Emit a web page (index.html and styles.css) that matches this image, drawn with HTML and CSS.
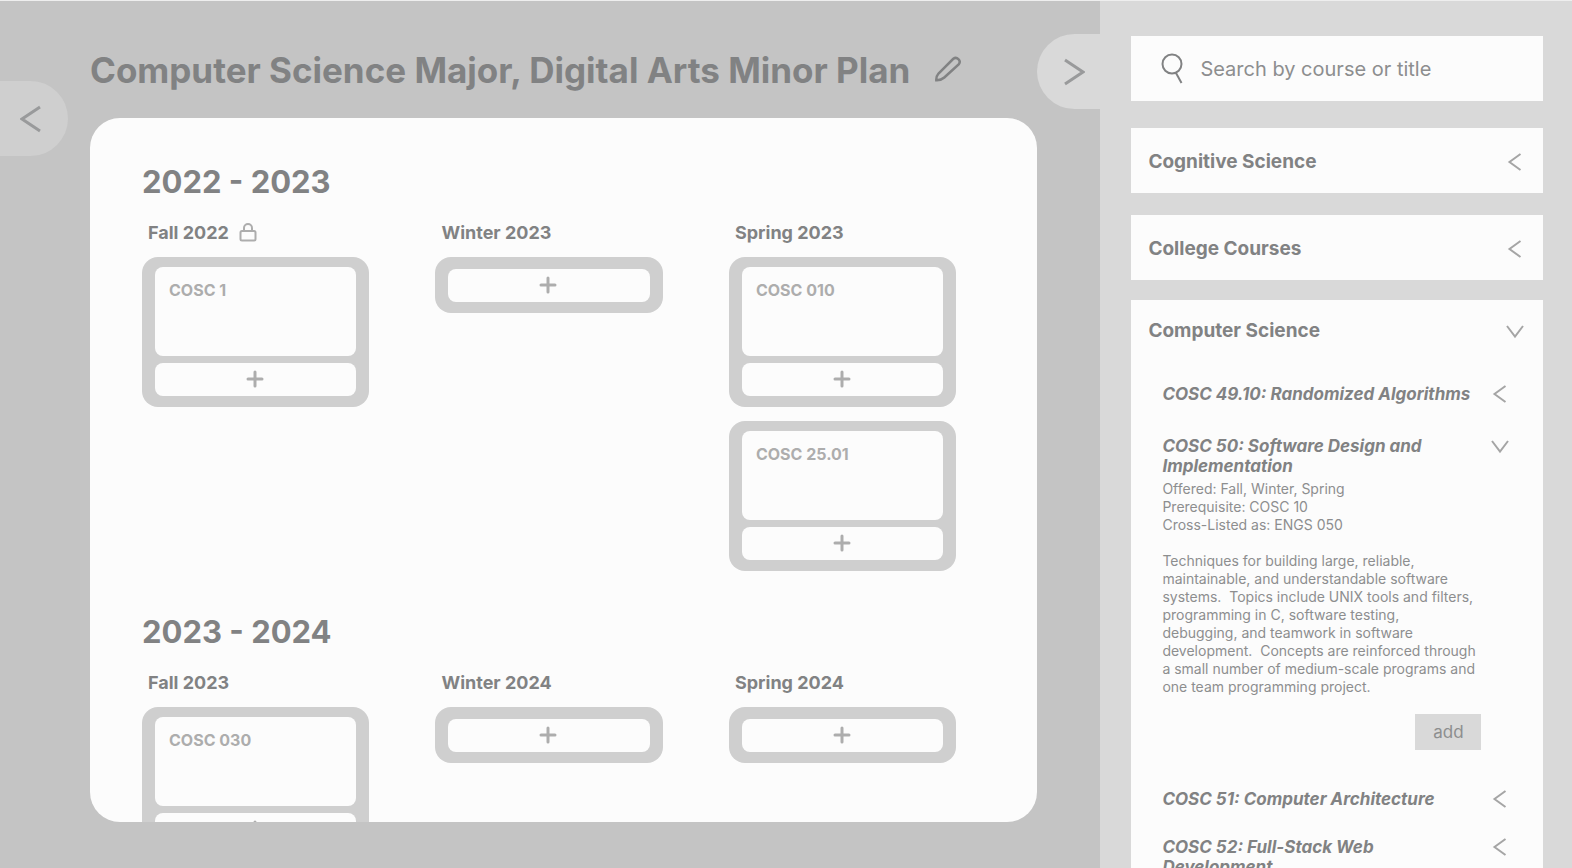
FILE: index.html
```html
<!DOCTYPE html>
<html lang="en">
<head>
<meta charset="utf-8">
<meta name="viewport" content="width=device-width, initial-scale=1">
<title>Course Plan</title>
<link rel="stylesheet" href="styles.css">
</head>
<body>
<svg class="sprite" aria-hidden="true">
  <symbol id="i-left" viewBox="0 0 18 18"><path d="M14.500 1 3.500 9l11 8"/></symbol>
  <symbol id="i-down" viewBox="0 0 18 18"><path d="M1 4l8 10.500L17 4"/></symbol>
  <symbol id="i-plus" viewBox="0 0 18 18"><path d="M9 2v14M2 9h14"/></symbol>
</svg>
<div class="app">
  <main class="planner">
    <button class="tab tab-prev" type="button" aria-label="Previous"><svg class="tab-icon" viewBox="0 0 22 28"><path d="M20 2 2 14l18 12"/></svg></button>
    <button class="tab tab-next" type="button" aria-label="Collapse course list"><svg class="tab-icon" viewBox="0 0 22 28"><path d="M2 2l18 12L2 26"/></svg></button>
    <header class="plan-header">
      <h1 class="plan-title">Computer Science Major, Digital Arts Minor Plan</h1>
      <button class="edit" type="button" aria-label="Edit plan name"><svg class="edit-icon" viewBox="0 0 28 28"><path d="M2.300 25.200q-.2-4 2.200-6.700L19.300 3.800a3.900 3.900 0 0 1 5.600 5.300L10.300 22.500q-3.300 2.900-8 2.700z"/></svg></button>
    </header>
    <div class="plan">
      <section class="year">
        <h2 class="year-title">2022 - 2023</h2>
        <div class="terms">
          <section class="term">
            <h3 class="term-title">Fall 2022 <svg class="lock" viewBox="0 0 18 20" role="img" aria-label="Locked"><rect x="1.500" y="8" width="15" height="9.500" rx="1.500"/><path d="M5 8V5a4 4 0 0 1 8 0v3"/></svg></h3>
            <div class="slot"><article class="course">COSC 1</article><button class="add-slot" type="button" aria-label="Add to Fall 2022"><svg class="plus"><use href="#i-plus"/></svg></button></div>
          </section>
          <section class="term">
            <h3 class="term-title">Winter 2023</h3>
            <div class="slot slot-empty"><button class="add-slot" type="button" aria-label="Add to Winter 2023"><svg class="plus"><use href="#i-plus"/></svg></button></div>
          </section>
          <section class="term">
            <h3 class="term-title">Spring 2023</h3>
            <div class="slot"><article class="course">COSC 010</article><button class="add-slot" type="button" aria-label="Add to Spring 2023"><svg class="plus"><use href="#i-plus"/></svg></button></div>
            <div class="slot"><article class="course">COSC 25.01</article><button class="add-slot" type="button" aria-label="Add to Spring 2023"><svg class="plus"><use href="#i-plus"/></svg></button></div>
          </section>
        </div>
      </section>
      <section class="year">
        <h2 class="year-title">2023 - 2024</h2>
        <div class="terms">
          <section class="term">
            <h3 class="term-title">Fall 2023</h3>
            <div class="slot"><article class="course">COSC 030</article><button class="add-slot" type="button" aria-label="Add to Fall 2023"><svg class="plus"><use href="#i-plus"/></svg></button></div>
          </section>
          <section class="term">
            <h3 class="term-title">Winter 2024</h3>
            <div class="slot slot-empty"><button class="add-slot" type="button" aria-label="Add to Winter 2024"><svg class="plus"><use href="#i-plus"/></svg></button></div>
          </section>
          <section class="term">
            <h3 class="term-title">Spring 2024</h3>
            <div class="slot slot-empty"><button class="add-slot" type="button" aria-label="Add to Spring 2024"><svg class="plus"><use href="#i-plus"/></svg></button></div>
          </section>
        </div>
      </section>
    </div>
  </main>
  <aside class="catalog">
    <label class="search">
      <svg class="search-icon" viewBox="0 0 24 32" aria-hidden="true"><circle cx="11" cy="11" r="9.500"/><path d="M15 20l5.500 10"/></svg>
      <input class="search-input" type="text" placeholder="Search by course or title" aria-label="Search by course or title">
    </label>
    <div class="subjects">
      <button class="subject subject-head" type="button">Cognitive Science<svg class="chev"><use href="#i-left"/></svg></button>
      <button class="subject subject-head" type="button">College Courses<svg class="chev"><use href="#i-left"/></svg></button>
    </div>
    <section class="subject">
      <button class="subject-head subject-head-open" type="button" aria-expanded="true">Computer Science<svg class="chev"><use href="#i-down"/></svg></button>
      <div class="offerings">
        <button class="offering" type="button"><span class="offering-name">COSC 49.10: Randomized Algorithms</span><svg class="chev"><use href="#i-left"/></svg></button>
        <button class="offering offering-open" type="button" aria-expanded="true"><span class="offering-name">COSC 50: Software Design and Implementation</span><svg class="chev"><use href="#i-down"/></svg></button>
        <div class="details">
          <p class="facts">Offered: Fall, Winter, Spring<br>Prerequisite: COSC 10<br>Cross-Listed as: ENGS 050</p>
          <p class="facts">Techniques for building large, reliable, maintainable, and understandable software systems.&nbsp; Topics include UNIX tools and filters, programming in C, software testing, debugging, and teamwork in software development.&nbsp; Concepts are reinforced through a small number of medium-scale programs and one team programming project.</p>
          <button class="add-course" type="button">add</button>
        </div>
        <button class="offering" type="button"><span class="offering-name">COSC 51: Computer Architecture</span><svg class="chev"><use href="#i-left"/></svg></button>
        <button class="offering" type="button"><span class="offering-name">COSC 52: Full-Stack Web Development</span><svg class="chev"><use href="#i-left"/></svg></button>
      </div>
    </section>
  </aside>
</div>
</body>
</html>
```
FILE: styles.css
```css
:root {
  --text: #818283;
  --muted: #adadad;
  --page: #c4c4c4;
  --tile: #cfcfcf;
  --side: #d9d9d9;
  --paper: #fcfcfc;
}

* { box-sizing: border-box; }

body {
  margin: 0;
  color: var(--text);
  font-family: Inter, "Liberation Sans", sans-serif;
}

h1, h2, h3, p { margin: 0; }

button {
  margin: 0;
  padding: 0;
  border: 0;
  background: none;
  color: inherit;
  font: inherit;
  text-align: left;
  cursor: pointer;
}

svg {
  display: block;
  flex: none;
  fill: none;
  stroke: currentColor;
}

.sprite { position: absolute; width: 0; height: 0; }

.app {
  display: flex;
  height: 100vh;
  overflow: hidden;
  border-top: 1px solid #eeeeee;
  background: var(--page);
}

/* Plan area */

.planner {
  position: relative;
  flex: 1;
  min-width: 0;
  display: flex;
  flex-direction: column;
  gap: 26px;
  padding: 47px 63px 46px 90px;
}

.plan-header { display: flex; align-items: center; gap: 24px; }

.plan-title { font-size: 35px; line-height: 44px; font-weight: 700; white-space: nowrap; }

.edit { padding-bottom: 2px; }

.edit-icon { width: 28px; height: 28px; stroke-width: 2.5; }

.tab {
  position: absolute;
  display: flex;
  align-items: center;
  height: 75px;
}

.tab-prev {
  top: 80px;
  left: 0;
  width: 68px;
  padding-left: 20px;
  border-radius: 0 38px 38px 0;
  background: var(--tile);
}

.tab-next {
  top: 33px;
  right: 0;
  width: 63px;
  padding-left: 26px;
  border-radius: 38px 0 0 38px;
  background: var(--side);
}

.tab-icon { width: 22px; height: 28px; stroke: #999a9b; stroke-width: 3; }

.plan {
  flex: 1;
  min-height: 0;
  overflow: hidden;
  display: flex;
  flex-direction: column;
  gap: 41px;
  padding: 44px 81px 0 52px;
  border-radius: 30px;
  background: var(--paper);
}

.year { display: flex; flex-direction: column; gap: 21px; }

.year-title { font-size: 31px; line-height: 40px; font-weight: 700; }

.terms {
  display: grid;
  grid-template-columns: repeat(3, minmax(0, 1fr));
  align-items: start;
  gap: 66px;
}

.term { display: flex; flex-direction: column; gap: 14px; }

.term-title {
  display: flex;
  align-items: center;
  gap: 10px;
  padding-left: 6px;
  font-size: 18px;
  line-height: 20px;
  font-weight: 700;
}

.lock { width: 18px; height: 20px; color: var(--muted); stroke-width: 2; }

.slot {
  display: flex;
  flex-direction: column;
  gap: 7px;
  padding: 10px 13px 11px;
  border-radius: 16px;
  background: var(--tile);
}

.slot-empty { padding-top: 12px; }

.course {
  min-height: 89px;
  padding: 13px 14px;
  border-radius: 8px;
  background: var(--paper);
  color: var(--muted);
  font-size: 16px;
  line-height: 20px;
  font-weight: 700;
}

.add-slot {
  display: flex;
  align-items: center;
  justify-content: center;
  height: 33px;
  padding: 0 2px 2px 0;
  border-radius: 8px;
  background: var(--paper);
  color: var(--muted);
}

.plus { width: 18px; height: 18px; stroke-width: 3; stroke-linecap: round; }

/* Course catalog */

.catalog {
  flex: none;
  width: 30%;
  min-width: 440px;
  overflow: hidden;
  padding: 35px 29px 0 31px;
  background: var(--side);
}

.search {
  display: flex;
  align-items: center;
  gap: 15px;
  height: 65px;
  padding: 1px 24px 0 30px;
  background: var(--paper);
}

.search-icon { width: 24px; height: 32px; stroke-width: 2; }

.search-input {
  flex: 1;
  min-width: 0;
  padding: 0;
  border: 0;
  outline: 0;
  background: none;
  color: inherit;
  font: inherit;
  font-size: 20px;
  line-height: 24px;
}

.search-input::placeholder { color: #8d8e8f; opacity: 1; }

.subjects {
  display: flex;
  flex-direction: column;
  gap: 22px;
  padding: 27px 0 20px;
}

.subject { width: 100%; background: var(--paper); }

.subject-head {
  display: flex;
  align-items: center;
  justify-content: space-between;
  width: 100%;
  height: 65px;
  padding: 2px 19px 0 17px;
  font-size: 19px;
  line-height: 22px;
  font-weight: 700;
}

.subject-head-open { padding-top: 0; padding-bottom: 3px; }

.chev { width: 18px; height: 18px; color: #a5a5a5; stroke-width: 2; }

.offerings {
  display: flex;
  flex-direction: column;
  gap: 28px;
  padding: 19px 34px 20px 31px;
}

.offering {
  display: flex;
  align-items: flex-start;
  justify-content: space-between;
  font-size: 17px;
  line-height: 20px;
  font-style: italic;
  font-weight: 700;
}

.offering .chev { margin-top: 1px; }

.offering-open { padding-top: 4px; }

.offering-name { max-width: 312px; }

.details {
  display: flex;
  flex-direction: column;
  gap: 18px;
  width: 319px;
  margin-top: -24px;
  padding-bottom: 11px;
}

.facts {
  max-width: 314px;
  color: #8d8e8f;
  font-size: 14px;
  line-height: 18px;
}

.add-course {
  align-self: flex-end;
  width: 66px;
  height: 36px;
  background: var(--side);
  color: #8d8e8f;
  font-size: 17px;
  text-align: center;
}
```
